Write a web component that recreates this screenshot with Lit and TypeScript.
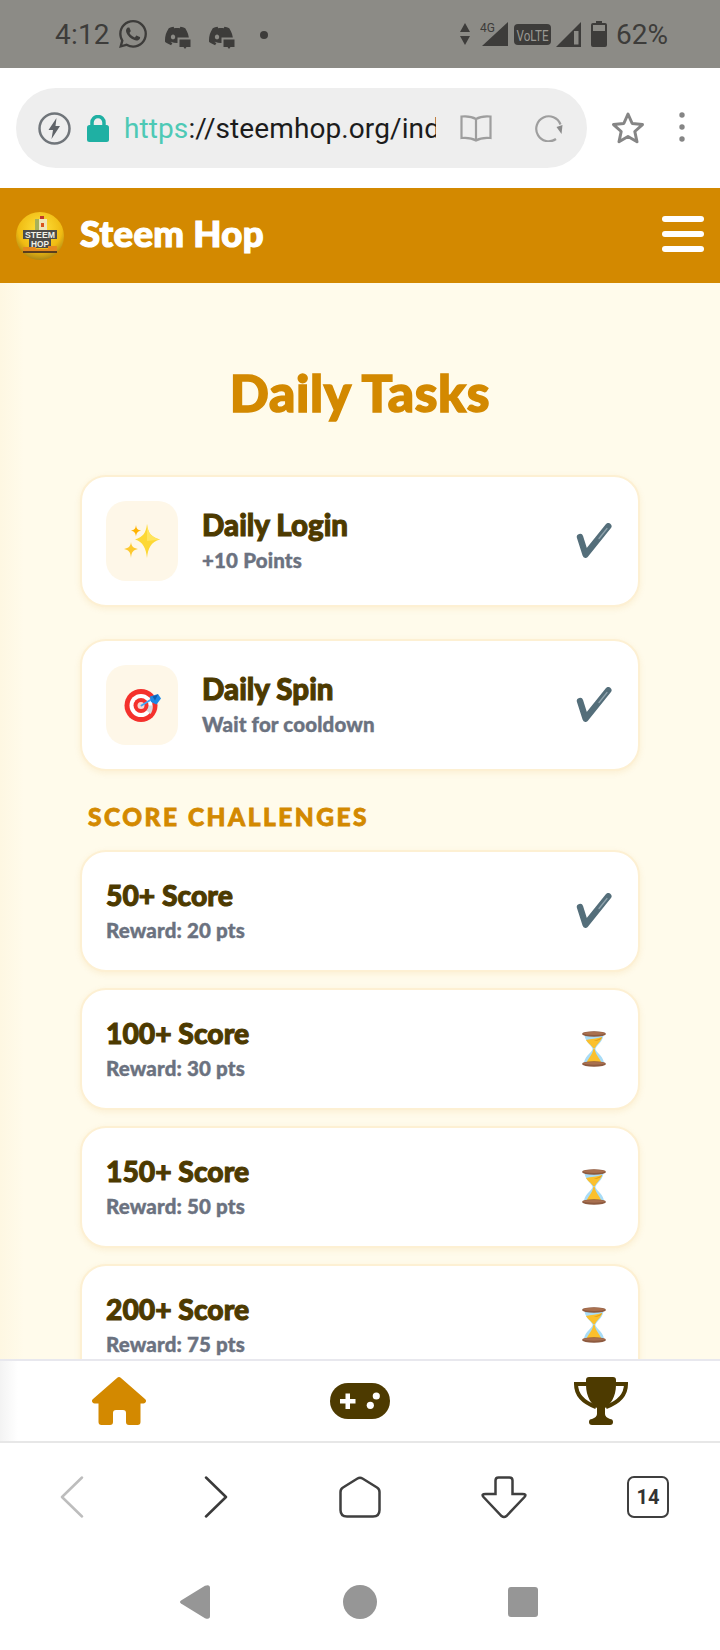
import { LitElement, html, css, svg } from "lit";
import { customElement } from "lit/decorators.js";

const check = html`<svg class="status" width="36" height="36" viewBox="0 0 36 36"><path d="M4 14L9.6 31.6L32.3 3.3" fill="none" stroke="#546e7a" stroke-width="6.4" stroke-linecap="round" stroke-linejoin="round"/><path d="M31 5.5L23 15.5" stroke="#90a4ae" stroke-width="1.3" stroke-linecap="round"/></svg>`;

const hourglass = html`<svg class="status hg" width="24" height="36" viewBox="0 0 24 36">
  <path d="M2.5 3C2.5 10 8 13 10.5 17.5V18.5C8 23 2 26 2 33H22C22 26 16 23 13.5 18.5V17.5C16 13 21.5 10 21.5 3Z" fill="#a8dcf7"/>
  <path d="M4 9C9 8 15 7.5 20 6C19.5 10 15 13 12.6 17.5H11.5C9 13.5 5.5 12 4 9Z" fill="#fbc02d"/>
  <path d="M12 9.5C15 9 18 8 20 6C19.6 8.5 15 10.5 12 9.5Z" fill="#e69f11"/>
  <path d="M11.3 18H12.7C13.4 24 18 27 20 33H4C6 27 10.6 24 11.3 18Z" fill="#fbc02d"/>
  <ellipse cx="12" cy="3" rx="12" ry="2.7" fill="#8d5a3f"/><ellipse cx="12" cy="2.3" rx="11" ry="1.6" fill="#a9704f"/>
  <ellipse cx="12" cy="33" rx="12" ry="2.7" fill="#8d5a3f"/><ellipse cx="12" cy="32.3" rx="11" ry="1.4" fill="#a9704f"/>
</svg>`;

const sparkles = html`<svg width="36" height="36" viewBox="0 0 36 36">
  <path d="M23 0C24 9 27 13 36 15.500C27 18 24 24 23 34C22 24 19 18 11 15.500C19 13 22 9 23 0Z" fill="#fdd835"/>
  <path d="M23 0C24 9 27 13 36 15.500L23 17Z" fill="#ffe45c"/>
  <path d="M12 1C12.500 5 13.500 6 17 6.500C13.500 7.500 12.500 9 12 12.500C11.500 9 10.500 7.500 7 6.500C10.500 6 11.500 5 12 1Z" fill="#ffb300"/>
  <path d="M7 18C7.500 22 9 24 14 25C9 26 7.500 28 7 34C6.500 28 5 26 0 25C5 24 6.500 22 7 18Z" fill="#fdc92f"/>
</svg>`;

const dart = html`<svg width="37" height="36" viewBox="0 0 37 36">
  <circle cx="17" cy="17.500" r="16.500" fill="#f4312c"/><circle cx="17" cy="17.500" r="11.500" fill="#fff"/>
  <path d="M26.500 26A11.500 11.500 0 0 0 28.500 17.500L17 17.500Z" fill="#d9d9de"/>
  <circle cx="17" cy="17.500" r="7.500" fill="#f4312c"/><circle cx="17" cy="17.500" r="3.500" fill="#f9d5d2"/>
  <path d="M17.500 17.500L28 11" stroke="#42a5f5" stroke-width="2" stroke-linecap="round"/>
  <path d="M26 8.500L34 6L37 10.500L32.500 16.500L27 14Z" fill="#1e88e5"/><path d="M28.500 8.500L34 6.500L31 12.500Z" fill="#0d5fb0"/>
</svg>`;

interface Row { t: string; s: string; done: boolean; }
const rows: Row[] = [
  { t: "50+ Score", s: "Reward: 20 pts", done: true },
  { t: "100+ Score", s: "Reward: 30 pts", done: false },
  { t: "150+ Score", s: "Reward: 50 pts", done: false },
  { t: "200+ Score", s: "Reward: 75 pts", done: false },
];

const discord = svg`<g transform="translate(0,-1)"><path fill="#3d3c3a" d="M20.317 4.3698a19.7913 19.7913 0 00-4.8851-1.5152.0741.0741 0 00-.0785.0371c-.211.3753-.4447.8648-.6083 1.2495-1.8447-.2762-3.68-.2762-5.4868 0-.1636-.3933-.4058-.8742-.6177-1.2495a.077.077 0 00-.0785-.037 19.7363 19.7363 0 00-4.8852 1.515.0699.0699 0 00-.0321.0277C.5334 9.0458-.319 13.5799.0992 18.0578a.0824.0824 0 00.0312.0561c2.0528 1.5076 4.0413 2.4228 5.9929 3.0294a.0777.0777 0 00.0842-.0276c.4616-.6304.8731-1.2952 1.226-1.9942a.076.076 0 00-.0416-.1057c-.6528-.2476-1.2743-.5495-1.8722-.8923a.077.077 0 01-.0076-.1277c.1258-.0943.2517-.1923.3718-.2914a.0743.0743 0 01.0776-.0105c3.9278 1.7933 8.18 1.7933 12.0614 0a.0739.0739 0 01.0785.0095c.1202.099.246.1981.3728.2924a.077.077 0 01-.0066.1276 12.2986 12.2986 0 01-1.873.8914.0766.0766 0 00-.0407.1067c.3604.698.7719 1.3628 1.225 1.9932a.076.076 0 00.0842.0286c1.961-.6067 3.9495-1.5219 6.0023-3.0294a.077.077 0 00.0313-.0552c.5004-5.177-.8382-9.6739-3.5485-13.6604a.061.061 0 00-.0312-.0286zM8.02 15.3312c-1.1825 0-2.1569-1.0857-2.1569-2.419 0-1.3332.9555-2.4189 2.157-2.4189 1.2108 0 2.1757 1.0952 2.1568 2.419 0 1.3332-.9555 2.4189-2.1569 2.4189z"/></g><path d="M12.500 12.500H27V24H12.500Z" fill="#8c8b86"/><path d="M14.500 14.500H25.500V22H21.500L20 24L18.500 22H14.500Z" fill="#3d3c3a"/>`;

@customElement("app-root")
export class AppRoot extends LitElement {
  static styles = css`
    :host { display: flex; flex-direction: column; width: 720px; height: 1650px; overflow: hidden; background: #fff; font-family: "Lato", "Noto Sans", sans-serif; }
    svg { display: block; flex: none; }

    .statusbar { height: 68px; flex: none; background: #8c8b86; color: #3d3c3a; display: flex; align-items: center; padding: 0 52px 0 55px; font-family: Roboto, sans-serif; font-size: 28px; }
    .statusbar .left { display: flex; align-items: center; }
    .time { margin-right: 9px; letter-spacing: .2px; }
    .wa { margin-right: 18px; }
    .dc1 { margin-right: 17px; margin-top: 5px; }
    .dc2 { margin-right: 24px; margin-top: 5px; }
    .dot { width: 8px; height: 8px; border-radius: 50%; background: #3d3c3a; margin-top: 2px; }
    .statusbar .right { margin-left: auto; display: flex; align-items: center; }
    .updn { margin-right: 10px; }
    .g4 { margin-right: 5px; }
    .volte { margin-right: 5px; }
    .sig2 { margin-right: 10px; }
    .batt { margin-right: 9px; }

    .browser { height: 120px; flex: none; background: #fff; display: flex; align-items: center; padding: 0 0 0 16px; }
    .pill { width: 571px; height: 80px; border-radius: 40px; background: #eee; display: flex; align-items: center; padding-left: 22px; box-sizing: border-box; }
    .lock { margin-left: 16px; margin-right: 15px; }
    .url { width: 312px; overflow: hidden; white-space: nowrap; font-family: Roboto, sans-serif; font-size: 28px; color: #1c1c1c; letter-spacing: .1px; }
    .url span { color: #4dc9b5; }
    .book { margin-left: 24px; }
    .reload { margin-left: 43px; }
    .star { margin-left: 24px; }
    .dots { margin-left: 34px; }

    .head { height: 95px; flex: none; background: #d38900; display: flex; align-items: center; padding: 0 16px; }
    .brand { color: #fff; font-size: 36.500px; line-height: 44px; font-weight: 900; margin: -6px 0 0 16px; letter-spacing: .3px; -webkit-text-stroke: 1.200px #fff; }
    .burger { margin: -3px 0 0 auto; display: flex; flex-direction: column; gap: 9px; }
    .burger i { display: block; width: 42px; height: 6px; border-radius: 3px; background: #fff; }

    main { flex: 1; min-height: 0; overflow: hidden; background: linear-gradient(90deg, #fef7e2 0, #fffbeb 24px); padding: 0 80px; }
    h1 { margin: 0; padding-top: 81px; height: 111px; box-sizing: content-box; text-align: center; color: #d38900; font-size: 51.500px; line-height: 56px; font-weight: 900; letter-spacing: .6px; -webkit-text-stroke: 1.500px #d38900; }
    .card { background: #fff; border: 2px solid #fdf0d3; border-radius: 26px; box-shadow: 0 2px 6px rgba(211, 137, 0, .1); display: flex; align-items: center; box-sizing: border-box; padding: 0 24px; }
    .task { height: 132px; margin-bottom: 32px; }
    .ico { width: 72px; height: 80px; border-radius: 20px; background: #fef7e8; display: flex; align-items: center; justify-content: center; margin-right: 24px; }
    .task .ico svg { margin-top: 1px; }
    .tt { color: #4d3a00; font-size: 29.500px; line-height: 34px; font-weight: 900; -webkit-text-stroke: 1px #4d3a00; }
    .score .tt { font-size: 28.300px; }
    .ss { color: #6b7280; font-size: 20.500px; line-height: 28px; font-weight: 900; margin-top: 4px; letter-spacing: .15px; -webkit-text-stroke: .4px #6b7280; }
    .status { margin-left: auto; margin-right: 2px; }
    .hg { margin-right: 8px; }
    .section { color: #d38900; font-size: 24.500px; line-height: 28px; font-weight: 900; letter-spacing: 2.500px; margin: 3px 0 0 8px; height: 47px; -webkit-text-stroke: .8px #d38900; }
    .score { height: 122px; margin-bottom: 16px; }

    .nav { height: 84px; flex: none; box-sizing: border-box; border-top: 2px solid #e8e8ee; border-bottom: 2px solid #e7e7e7; padding-bottom: 1px; background: linear-gradient(90deg, #f3f3f3 0, #fff 18px); display: grid; grid-template-columns: repeat(3, 1fr); align-items: center; justify-items: center; }
    .n-home { margin-right: 2px; }
    .n-cup { margin-left: 2px; }

    .chrome { height: 112px; flex: none; display: grid; grid-template-columns: repeat(5, 1fr); align-items: center; justify-items: center; background: #fff; padding-bottom: 4px; box-sizing: border-box; }
    .tabs { width: 42px; height: 42px; box-sizing: border-box; border: 2.500px solid #3f3f3f; border-radius: 7px; display: flex; align-items: center; justify-content: center; font-family: Roboto, sans-serif; font-weight: 700; font-size: 20px; color: #333; }

    .sys { height: 95px; flex: none; box-sizing: border-box; padding: 0 2px 2px 0; display: flex; align-items: center; justify-content: center; background: #fff; }
    .tri { margin-right: 133px; }
    .cir { width: 34px; height: 34px; border-radius: 50%; background: #969696; margin-right: 131px; }
    .sq { width: 30px; height: 30px; border-radius: 3px; background: #969696; }
  `;

  render() {
    return html`
      <div class="statusbar">
        <div class="left">
          <span class="time">4:12</span>
          <svg class="wa" width="28" height="28" viewBox="0 0 24 24"><path fill="#3d3c3a" d="M17.472 14.382c-.297-.149-1.758-.867-2.03-.967-.273-.099-.471-.148-.67.15-.197.297-.767.966-.94 1.164-.173.199-.347.223-.644.075-.297-.15-1.255-.463-2.39-1.475-.883-.788-1.48-1.761-1.653-2.059-.173-.297-.018-.458.13-.606.134-.133.298-.347.446-.52.149-.174.198-.298.298-.497.099-.198.05-.371-.025-.52-.075-.149-.669-1.612-.916-2.207-.242-.579-.487-.5-.669-.51-.173-.008-.371-.01-.57-.01-.198 0-.52.074-.792.372-.272.297-1.04 1.016-1.04 2.479 0 1.462 1.065 2.875 1.213 3.074.149.198 2.096 3.2 5.077 4.487.709.306 1.262.489 1.694.625.712.227 1.36.195 1.871.118.571-.085 1.758-.719 2.006-1.413.248-.694.248-1.289.173-1.413-.074-.124-.272-.198-.57-.347m-5.421 7.403h-.004a9.87 9.87 0 01-5.031-1.378l-.361-.214-3.741.982.998-3.648-.235-.374a9.86 9.86 0 01-1.51-5.26c.001-5.45 4.436-9.884 9.888-9.884 2.64 0 5.122 1.03 6.988 2.898a9.825 9.825 0 012.893 6.994c-.003 5.45-4.437 9.884-9.885 9.884m8.413-18.297A11.815 11.815 0 0012.05 0C5.495 0 .16 5.335.157 11.892c0 2.096.547 4.142 1.588 5.945L.057 24l6.305-1.654a11.882 11.882 0 005.683 1.448h.005c6.554 0 11.89-5.335 11.893-11.893a11.821 11.821 0 00-3.48-8.413Z"/></svg>
          <svg class="dc1" width="27" height="24" viewBox="0 0 27 24">${discord}</svg>
          <svg class="dc2" width="27" height="24" viewBox="0 0 27 24">${discord}</svg>
          <i class="dot"></i>
        </div>
        <div class="right">
          <svg class="updn" width="10" height="22" viewBox="0 0 10 22"><path d="M5 0L10 9H0ZM0 13H10L5 22Z" fill="#3d3c3a"/></svg>
          <svg class="g4" width="29" height="26" viewBox="0 0 29 26"><path d="M28 1V25H2Z" fill="#3d3c3a"/><text x="0" y="11" font-family="Roboto" font-size="12" fill="#3d3c3a">4G</text></svg>
          <svg class="volte" width="37" height="21" viewBox="0 0 37 21"><rect width="37" height="21" rx="4" fill="#3d3c3a"/><text x="2.500" y="16.500" font-family="Roboto" font-size="15" fill="#9a9994" textLength="32" lengthAdjust="spacingAndGlyphs">VoLTE</text></svg>
          <svg class="sig2" width="25" height="25" viewBox="0 0 25 25"><path d="M25 0V25H0Z" fill="#3d3c3a"/><path d="M18 9H22.500V22.500H18Z" fill="#8c8b86"/></svg>
          <svg class="batt" width="16" height="26" viewBox="0 0 16 26"><path d="M5 0H11V2H14Q16 2 16 4V24Q16 26 14 26H2Q0 26 0 24V4Q0 2 2 2H5Z" fill="#3d3c3a"/><rect x="2" y="4" width="12" height="6" fill="#8c8b86"/></svg>
          <span>62%</span>
        </div>
      </div>

      <div class="browser">
        <div class="pill">
          <svg width="33" height="33" viewBox="0 0 33 33"><circle cx="16.500" cy="16.500" r="15" fill="none" stroke="#70757a" stroke-width="2.500"/><path d="M18.500 6L10.500 18H15L13.500 27L22 14H17.500Z" fill="#5f6368"/></svg>
          <svg class="lock" width="22" height="27" viewBox="0 0 22 27"><path d="M5 12V7.500a6 6 0 0 1 12 0V12" fill="none" stroke="#1fb0a3" stroke-width="3.500"/><rect y="10" width="22" height="17" rx="2.500" fill="#1fb0a3"/></svg>
          <div class="url"><span>https</span>://steemhop.org/index.html</div>
          <svg class="book" width="32" height="28" viewBox="0 0 32 28"><path d="M16 5C12 2.500 7 2 1.500 2.500V24C7 23.500 12 24 16 26.500C20 24 25 23.500 30.500 24V2.500C25 2 20 2.500 16 5ZM16 5V26" fill="none" stroke="#9e9e9e" stroke-width="2.200"/></svg>
          <svg class="reload" width="28" height="28" viewBox="0 0 28 28"><path d="M21 25A12.500 12.500 0 1 1 25.500 10.500" fill="none" stroke="#9e9e9e" stroke-width="2.200"/><path d="M21.500 13L27.500 11L26.500 20Z" fill="#8a8a8a"/></svg>
        </div>
        <svg class="star" width="34" height="34" viewBox="0 0 34 34"><path d="M17 3L21.200 12.500L31.500 13.600L23.800 20.500L26 30.700L17 25.500L8 30.700L10.200 20.500L2.500 13.600L12.800 12.500Z" fill="none" stroke="#858585" stroke-width="3" stroke-linejoin="round"/></svg>
        <svg class="dots" width="6" height="32" viewBox="0 0 6 32"><circle cx="3" cy="3" r="2.700" fill="#858585"/><circle cx="3" cy="15" r="2.700" fill="#858585"/><circle cx="3" cy="27" r="2.700" fill="#858585"/></svg>
      </div>

      <header class="head">
        <svg width="48" height="48" viewBox="0 0 48 48">
          <defs><radialGradient id="lg" cx=".5" cy=".35" r=".7"><stop offset="0" stop-color="#ffe23d"/><stop offset=".65" stop-color="#f0bb12"/><stop offset="1" stop-color="#9c7a16"/></radialGradient></defs>
          <circle cx="24" cy="24" r="24" fill="url(#lg)"/>
          <rect x="19" y="7" width="12" height="11" fill="#efe6b8"/><rect x="19" y="7" width="4" height="11" fill="#a7b158"/><rect x="24" y="4" width="4" height="3" fill="#c0392b"/><rect x="25" y="11" width="3" height="4" fill="#d9541e"/>
          <path d="M7 18H41V27H35V36H13V27H7Z" fill="#4c4c48"/>
          <path d="M7 35H20V37H32V34H41V39H7Z" fill="#e58a1f"/><path d="M7 39H41V41H7Z" fill="#5a3d1e"/>
          <text x="24" y="26" text-anchor="middle" font-family="Liberation Sans" font-weight="700" font-size="9" fill="#f1f1e6" textLength="30" lengthAdjust="spacingAndGlyphs">STEEM</text>
          <text x="24" y="34.500" text-anchor="middle" font-family="Liberation Sans" font-weight="700" font-size="9" fill="#f1f1e6" textLength="18" lengthAdjust="spacingAndGlyphs">HOP</text>
        </svg>
        <span class="brand">Steem Hop</span>
        <div class="burger"><i></i><i></i><i></i></div>
      </header>

      <main>
        <h1>Daily Tasks</h1>
        <div class="card task">
          <div class="ico">${sparkles}</div>
          <div><div class="tt">Daily Login</div><div class="ss">+10 Points</div></div>
          ${check}
        </div>
        <div class="card task">
          <div class="ico">${dart}</div>
          <div><div class="tt">Daily Spin</div><div class="ss">Wait for cooldown</div></div>
          ${check}
        </div>
        <div class="section">SCORE CHALLENGES</div>
        ${rows.map((r) => html`
          <div class="card score">
            <div><div class="tt">${r.t}</div><div class="ss">${r.s}</div></div>
            ${r.done ? check : hourglass}
          </div>`)}
      </main>

      <nav class="nav">
        <svg class="n-home" width="54" height="48" viewBox="0 0 54 48"><path fill="#d38900" d="M25 1a3 3 0 0 1 4 0L53 22a2.500 2.500 0 0 1-1.500 4.500H48.500V45a3 3 0 0 1-3 3H37a3 3 0 0 1-3-3V36a3 3 0 0 0-3-3H24a3 3 0 0 0-3 3V45a3 3 0 0 1-3 3H9.500a3 3 0 0 1-3-3V26.500H2.500A2.500 2.500 0 0 1 1 22Z"/></svg>
        <svg width="60" height="36" viewBox="0 0 60 36"><rect width="60" height="36" rx="18" fill="#4d3a00"/><path d="M15.500 10.500H20V16H25.500V20.500H20V26H15.500V20.500H10V16H15.500Z" fill="#fff"/><circle cx="46.300" cy="13" r="3.600" fill="#fff"/><circle cx="40.300" cy="22.300" r="3.600" fill="#fff"/></svg>
        <svg class="n-cup" width="54" height="48" viewBox="0 0 54 48"><path d="M12 7H2C2 19 11 26 22 30M42 7H52C52 19 43 26 32 30" fill="none" stroke="#4d3a00" stroke-width="4"/><path fill="#4d3a00" d="M12 3Q12 0 15 0H39Q42 0 42 3V8C42 20 36 28 31 31V37C31 39 33 41 36 42H18C21 41 23 39 23 37V31C18 28 12 20 12 8Z"/><rect x="15" y="42" width="24" height="6" rx="3" fill="#4d3a00"/></svg>
      </nav>

      <div class="chrome">
        <svg width="24" height="42" viewBox="0 0 24 42"><path d="M22 1.500L2 21L22 40.500" fill="none" stroke="#bdbdbd" stroke-width="2.500" stroke-linecap="round" stroke-linejoin="round"/></svg>
        <svg width="24" height="42" viewBox="0 0 24 42"><path d="M2 1.500L22 21L2 40.500" fill="none" stroke="#3a3a3a" stroke-width="2.500" stroke-linecap="round" stroke-linejoin="round"/></svg>
        <svg width="42" height="42" viewBox="0 0 42 42"><path d="M1.500 16Q1.500 13 4 11.500L18.500 2.500Q21 1 23.500 2.500L38 11.500Q40.500 13 40.500 16V34Q40.500 40.500 34 40.500H8Q1.500 40.500 1.500 34Z" fill="none" stroke="#3f3f3f" stroke-width="2.500"/></svg>
        <svg width="46" height="43" viewBox="0 0 46 43"><path d="M14.500 4.500Q14.500 1.500 17.500 1.500H28.500Q31.500 1.500 31.500 4.500V18H41.500Q46 18 43.500 21L25.500 40Q23 42 20.500 40L2.500 21Q0 18 4.500 18H14.500Z" fill="none" stroke="#3f3f3f" stroke-width="2.500"/></svg>
        <div class="tabs">14</div>
      </div>

      <div class="sys">
        <svg class="tri" width="30" height="34" viewBox="0 0 30 34"><path d="M1 15.500L25 .8Q30 -1 30 3V31Q30 35 25 33.200L1 18.500Q-1 17 1 15.500Z" fill="#969696"/></svg>
        <i class="cir"></i>
        <i class="sq"></i>
      </div>
    `;
  }
}
